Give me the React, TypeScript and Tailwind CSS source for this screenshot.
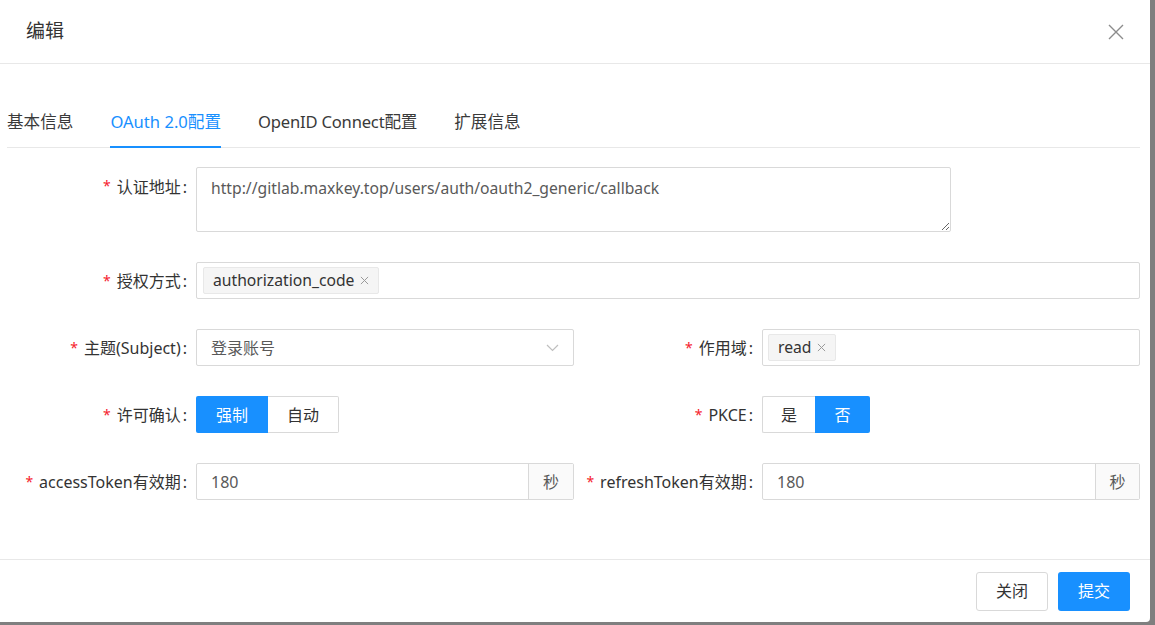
import React from "react";

const FONT = { fontFamily: '"Segoe UI", "Noto Sans", "Noto Sans CJK SC", sans-serif' };

function Label({ text, w }: { text: string; w: string }) {
  return (
    <div className={`${w} shrink-0 flex justify-end items-center pr-[8px] text-[16px] text-[#333]`}>
      <span className="text-[#f5222d] mr-[6px] text-[14px]">*</span>
      <span>{text}</span>
      <span className="ml-[2px] mr-[1px]">:</span>
    </div>
  );
}

function Tag({ text }: { text: string }) {
  return (
    <span className="inline-flex items-center h-[27px] px-[9px] bg-[#f5f5f5] border border-[#e8e8e8] rounded-[2px] text-[15.7px] text-[#333]">
      {text}
      <svg width="9" height="9" viewBox="0 0 10 10" className="ml-[6px]">
        <path d="M1 1L9 9M9 1L1 9" stroke="#999" strokeWidth="1.1" />
      </svg>
    </span>
  );
}

export default function App() {
  return (
    <div className="w-full h-[625px] bg-[#7f7f7f] overflow-hidden" style={FONT}>
      <div className="w-[1150px] h-[622px] bg-white rounded-br-[4px] flex flex-col">
        {/* header */}
        <div className="h-[64px] shrink-0 border-b border-[#e8e8e8] flex items-center justify-between pl-[26px] pr-[26px]">
          <span className="text-[19px] text-[#333]">编辑</span>
          <svg width="16" height="16" viewBox="0 0 16 16">
            <path d="M1 1L15 15M15 1L1 15" stroke="#8c8c8c" strokeWidth="1.4" />
          </svg>
        </div>
        {/* body */}
        <div className="flex-1 pl-[7px] pr-[10px] pt-[34px]">
          <div className="flex gap-[37px] border-b border-[#e8e8e8] h-[50px] text-[16.6px] text-[#3a3a3a]">
            <div className="flex items-center h-full">基本信息</div>
            <div className="flex items-center h-full text-[#1890ff] border-b-2 border-[#1890ff] relative top-[1px]">OAuth 2.0配置</div>
            <div className="flex items-center h-full tracking-[-0.2px]">OpenID Connect配置</div>
            <div className="flex items-center h-full">扩展信息</div>
          </div>
          <div className="-ml-[7px] pt-[19px] flex flex-col gap-[30px]">
            <div className="flex items-start">
              <div className="w-[196px] shrink-0 flex justify-end pt-[8px] pr-[8px] text-[16px] text-[#333]">
                <span className="text-[#f5222d] mr-[6px] text-[14px]">*</span>
                <span>认证地址</span>
                <span className="ml-[2px] mr-[1px]">:</span>
              </div>
              <textarea
                readOnly
                defaultValue="http://gitlab.maxkey.top/users/auth/oauth2_generic/callback"
                className="w-[755px] h-[65px] border border-[#d9d9d9] rounded-[2px] px-[14px] py-[9px] text-[15.7px] text-[#595959] outline-none leading-[22px]"
                style={FONT}
              />
            </div>
            <div className="flex items-center">
              <Label text="授权方式" w="w-[196px]" />
              <div className="w-[944px] h-[37px] border border-[#d9d9d9] rounded-[2px] flex items-center px-[6px]">
                <Tag text="authorization_code" />
              </div>
            </div>
            <div className="flex items-center">
              <Label text="主题(Subject)" w="w-[196px]" />
              <div className="w-[378px] h-[37px] border border-[#d9d9d9] rounded-[2px] flex items-center justify-between pl-[14px] pr-[14px] text-[16px] text-[#595959]">
                <span>登录账号</span>
                <svg width="13" height="8" viewBox="0 0 13 8">
                  <path d="M1 1L6.5 6.5L12 1" stroke="#bfbfbf" strokeWidth="1.2" fill="none" />
                </svg>
              </div>
              <Label text="作用域" w="w-[188px]" />
              <div className="w-[378px] h-[37px] border border-[#d9d9d9] rounded-[2px] flex items-center px-[5px]">
                <Tag text="read" />
              </div>
            </div>
            <div className="flex items-center">
              <Label text="许可确认" w="w-[196px]" />
              <div className="w-[378px] flex">
                <div className="w-[72px] h-[37px] bg-[#1890ff] rounded-l-[2px] text-white text-[16px] flex items-center justify-center">强制</div>
                <div className="w-[71px] h-[37px] border border-l-0 border-[#d9d9d9] rounded-r-[2px] text-[#333] text-[16px] flex items-center justify-center">自动</div>
              </div>
              <Label text="PKCE" w="w-[188px]" />
              <div className="flex">
                <div className="w-[53px] h-[37px] border border-r-0 border-[#d9d9d9] rounded-l-[2px] text-[#333] text-[16px] flex items-center justify-center">是</div>
                <div className="w-[55px] h-[37px] bg-[#1890ff] rounded-r-[2px] text-white text-[16px] flex items-center justify-center">否</div>
              </div>
            </div>
            <div className="flex items-center">
              <Label text="accessToken有效期" w="w-[196px]" />
              <div className="w-[378px] h-[37px] border border-[#d9d9d9] rounded-[2px] flex text-[16px]">
                <div className="flex-1 flex items-center pl-[14px] text-[#595959]">180</div>
                <div className="w-[45px] border-l border-[#d9d9d9] bg-[#fafafa] flex items-center justify-center text-[#595959]">秒</div>
              </div>
              <Label text="refreshToken有效期" w="w-[188px]" />
              <div className="w-[378px] h-[37px] border border-[#d9d9d9] rounded-[2px] flex text-[16px]">
                <div className="flex-1 flex items-center pl-[14px] text-[#595959]">180</div>
                <div className="w-[44px] border-l border-[#d9d9d9] bg-[#fafafa] flex items-center justify-center text-[#595959]">秒</div>
              </div>
            </div>
          </div>
        </div>
        {/* footer */}
        <div className="h-[63px] shrink-0 border-t border-[#e8e8e8] flex items-center justify-end gap-[10px] pr-[20px]">
          <div className="w-[72px] h-[39px] border border-[#d9d9d9] rounded-[3px] flex items-center justify-center text-[16px] text-[#333]">关闭</div>
          <div className="w-[72px] h-[39px] bg-[#1890ff] rounded-[3px] flex items-center justify-center text-[16px] text-white">提交</div>
        </div>
      </div>
    </div>
  );
}
